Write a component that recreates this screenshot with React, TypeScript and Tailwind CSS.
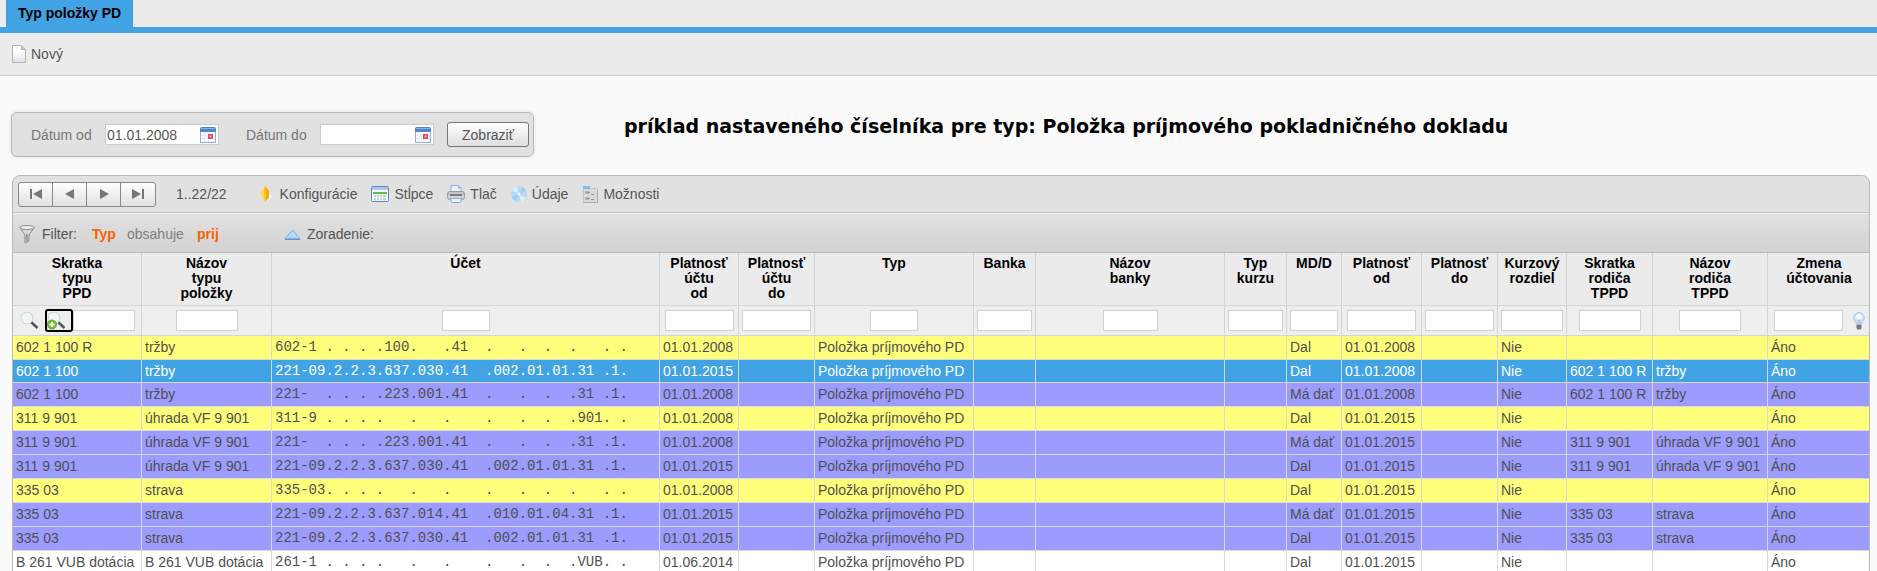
import type { ReactNode } from 'react'

type Column = { title: string; width: string; field: string }

const columns: Column[] = [
  { title: 'Skratka\ntypu\nPPD', width: 'w-[129px]', field: 'w-[62px]' },
  { title: 'Názov\ntypu\npoložky', width: 'w-[130px]', field: 'w-[62px]' },
  { title: 'Účet', width: 'w-[388px]', field: 'w-[48px]' },
  { title: 'Platnosť\núčtu\nod', width: 'w-[79px]', field: 'w-[69px]' },
  { title: 'Platnosť\núčtu\ndo', width: 'w-[76px]', field: 'w-[69px]' },
  { title: 'Typ', width: 'w-[159px]', field: 'w-[48px]' },
  { title: 'Banka', width: 'w-[62px]', field: 'w-[55px]' },
  { title: 'Názov\nbanky', width: 'w-[189px]', field: 'w-[55px]' },
  { title: 'Typ\nkurzu', width: 'w-[62px]', field: 'w-[55px]' },
  { title: 'MD/D', width: 'w-[55px]', field: 'w-[48px]' },
  { title: 'Platnosť\nod', width: 'w-[80px]', field: 'w-[69px]' },
  { title: 'Platnosť\ndo', width: 'w-[76px]', field: 'w-[69px]' },
  { title: 'Kurzový\nrozdiel', width: 'w-[69px]', field: 'w-[62px]' },
  { title: 'Skratka\nrodiča\nTPPD', width: 'w-[86px]', field: 'w-[62px]' },
  { title: 'Názov\nrodiča\nTPPD', width: 'w-[115px]', field: 'w-[62px]' },
  { title: 'Zmena\núčtovania', width: 'w-[102px]', field: 'w-[69px]' },
]

const rowStyles = {
  parent: 'h-6 bg-[#ffff7b] text-[#505050]',
  child: 'h-6 bg-[#9c9cff] text-[#505050]',
  selected: 'h-[23px] bg-[#42a3e4] text-white',
  plain: 'h-6 bg-white text-[#505050]',
}

type Row = {
  kind: keyof typeof rowStyles
  code: string
  name: string
  account: string
  accountFrom: string
  side: string
  from: string
  parentCode?: string
  parentName?: string
}

const rows: Row[] = [
  { kind: 'parent', code: '602 1 100 R', name: 'tržby', account: '602-1 . . . .100.   .41  .   .  .  .   . .', accountFrom: '01.01.2008', side: 'Dal', from: '01.01.2008' },
  { kind: 'selected', code: '602 1 100', name: 'tržby', account: '221-09.2.2.3.637.030.41  .002.01.01.31 .1.', accountFrom: '01.01.2015', side: 'Dal', from: '01.01.2008', parentCode: '602 1 100 R', parentName: 'tržby' },
  { kind: 'child', code: '602 1 100', name: 'tržby', account: '221-  . . . .223.001.41  .   .  .  .31 .1.', accountFrom: '01.01.2008', side: 'Má dať', from: '01.01.2008', parentCode: '602 1 100 R', parentName: 'tržby' },
  { kind: 'parent', code: '311 9 901', name: 'úhrada VF 9 901', account: '311-9 . . . .   .   .    .   .  .  .901. .', accountFrom: '01.01.2008', side: 'Dal', from: '01.01.2015' },
  { kind: 'child', code: '311 9 901', name: 'úhrada VF 9 901', account: '221-  . . . .223.001.41  .   .  .  .31 .1.', accountFrom: '01.01.2008', side: 'Má dať', from: '01.01.2015', parentCode: '311 9 901', parentName: 'úhrada VF 9 901' },
  { kind: 'child', code: '311 9 901', name: 'úhrada VF 9 901', account: '221-09.2.2.3.637.030.41  .002.01.01.31 .1.', accountFrom: '01.01.2015', side: 'Dal', from: '01.01.2015', parentCode: '311 9 901', parentName: 'úhrada VF 9 901' },
  { kind: 'parent', code: '335 03', name: 'strava', account: '335-03. . . .   .   .    .   .  .  .   . .', accountFrom: '01.01.2008', side: 'Dal', from: '01.01.2015' },
  { kind: 'child', code: '335 03', name: 'strava', account: '221-09.2.2.3.637.014.41  .010.01.04.31 .1.', accountFrom: '01.01.2015', side: 'Má dať', from: '01.01.2015', parentCode: '335 03', parentName: 'strava' },
  { kind: 'child', code: '335 03', name: 'strava', account: '221-09.2.2.3.637.030.41  .002.01.01.31 .1.', accountFrom: '01.01.2015', side: 'Dal', from: '01.01.2015', parentCode: '335 03', parentName: 'strava' },
  { kind: 'plain', code: 'B 261 VUB dotácia', name: 'B 261 VUB dotácia', account: '261-1 . . . .   .   .    .   .  .  .VUB. .', accountFrom: '01.06.2014', side: 'Dal', from: '01.01.2015' },
]

function PageIcon() {
  return (
    <svg width="14" height="18" viewBox="0 0 14 18">
      <defs>
        <linearGradient id="page" x1="0" y1="0" x2="0" y2="1">
          <stop offset="0.4" stopColor="#fff" />
          <stop offset="1" stopColor="#e0e0e0" />
        </linearGradient>
      </defs>
      <path d="M.5.5h9l4 4v13H.5z" fill="url(#page)" stroke="#b4b4b4" />
      <path d="M9.5.5v4h4z" fill="#ccc" stroke="#b4b4b4" />
    </svg>
  )
}

function CalendarIcon() {
  return (
    <svg width="16" height="16" viewBox="0 0 16 16">
      <rect x=".5" y="1.5" width="15" height="14" fill="#f6f9ff" stroke="#8fb0e0" />
      <path d="M0 2Q0 0 2 0h12q2 0 2 2v3H0z" fill="#4f86cb" />
      <path d="M1 1h14v1H1z" fill="#8db2e2" />
      <path d="M1 8.5h14M1 11.5h14M4.5 6v9M8.5 6v9" stroke="#e3eaf6" />
      <rect x="8" y="7" width="5" height="5" fill="#d9485f" />
      <rect x="9.5" y="8.5" width="2" height="2" fill="#f7b4bd" />
    </svg>
  )
}

function ConfigIcon() {
  return (
    <svg width="16" height="18" viewBox="0 0 16 18">
      <path d="M8 6l7 6-8 5z" fill="#eef2fa" stroke="#d0d6e2" strokeWidth=".6" />
      <path d="M6 1L1 7.5l5 9.500z" fill="#ffd84f" />
      <path d="M6 1l4 5v7l-4 3.500z" fill="#eeb000" />
      <path d="M5 2l2 3v10l-2-1z" fill="#fac71f" />
    </svg>
  )
}

function ColumnsIcon() {
  return (
    <svg width="18" height="16" viewBox="0 0 18 16">
      <rect x=".5" y=".5" width="17" height="15" rx="1" fill="#f3f7fb" stroke="#5b86b8" />
      <path d="M1 1h16v3H1z" fill="#a9c6ec" />
      <path d="M1 4h16v1H1z" fill="#fff" />
      <path d="M2 6h14v2H2z" fill="#5fbd3f" />
      <path d="M3 9h2v2H3zM6 9h2v2H6zM9 9h2v2H9zM12 9h3v2h-3zM3 12h2v2H3zM6 12h2v2H6zM9 12h2v2H9zM12 12h3v2h-3z" fill="#c3cedb" />
    </svg>
  )
}

function PrinterIcon() {
  return (
    <svg width="18" height="18" viewBox="0 0 18 18">
      <path d="M4 8V.5h7l3 3V8z" fill="#eaf4ff" stroke="#89aee0" />
      <path d="M11 .5v3h3z" fill="#7fa8e6" />
      <rect x=".5" y="6.5" width="17" height="8" rx="2.500" fill="#c6c6c6" stroke="#9a9a9a" />
      <path d="M3 9h12v2H3z" fill="#7a7a7a" />
      <path d="M1 11.5h16v1H1z" fill="#e4e4e4" />
      <path d="M3.5 13.5h11l-1 4h-9z" fill="#e8f3ff" stroke="#84abe2" />
    </svg>
  )
}

function DiscIcon() {
  return (
    <svg width="16" height="16" viewBox="0 0 16 16">
      <circle cx="8" cy="8" r="8" fill="#b5dbf8" />
      <path d="M8 8L1 4a8 8 0 0 1 5-4zM8 8l7 4a8 8 0 0 1-5 4z" fill="#deeffc" />
      <path d="M8 8l4-7a8 8 0 0 1 3 4zM8 8l-4 7a8 8 0 0 1-3-4z" fill="#9accf5" />
      <circle cx="8" cy="8" r="2" fill="#fff" stroke="#a5cdec" strokeWidth=".8" />
    </svg>
  )
}

function OptionsIcon() {
  return (
    <svg width="16" height="17" viewBox="0 0 16 17">
      <rect x="1.5" y="2.5" width="14" height="14" rx="1" fill="#d9d9d9" stroke="#c2c2c2" />
      <path d="M1 16.5h14.5V4" fill="none" stroke="#acacac" />
      <path d="M1 0h7v3H1z" fill="#7cc0ea" />
      <path d="M3 5h4v3H3zM3 11h4v3H3z" fill="#b5b5b5" />
      <path d="M5 6.5h3M9 8.500h3M5 12.5h3M9 13.5h3" stroke="#909090" />
    </svg>
  )
}

function FunnelIcon() {
  return (
    <svg width="16" height="19" viewBox="0 0 16 19">
      <path d="M.8 2.500L6 10v8l4-2v-6l5.200-7.500z" fill="#d9d9d9" stroke="#8b8b8b" />
      <path d="M8 9v7" stroke="#9d9d9d" strokeWidth="2" />
      <ellipse cx="8" cy="2.500" rx="7.300" ry="2" fill="#eee" stroke="#8b8b8b" />
    </svg>
  )
}

function SortIcon() {
  return (
    <svg width="17" height="11" viewBox="0 0 17 11">
      <path d="M1 9.5L8.5 1 16 9.5z" fill="#b5d7fa" stroke="#84b0e4" />
      <path d="M1 10.5h15" stroke="#6d90bd" />
    </svg>
  )
}

function SearchIcon({ plus = false }: { plus?: boolean }) {
  return (
    <svg width="19" height="19" viewBox="0 0 19 19">
      <path d="M11 11l6.500 6" stroke="#555" strokeWidth="2.500" />
      <circle cx="7" cy="7" r="5.800" fill="#f1f6f8" stroke="#d0d7da" strokeWidth="1.200" />
      {plus && (
        <>
          <circle cx="5" cy="13.500" r="4.500" fill="#6fc22e" stroke="#5fae2a" />
          <path d="M5 11v5M2.500 13.500h5" stroke="#fff" strokeWidth="1.800" />
        </>
      )}
    </svg>
  )
}

function BulbIcon() {
  return (
    <svg width="12" height="18" viewBox="0 0 12 18">
      <path d="M6 .6a5.300 5.300 0 0 0-5.300 5.300C.7 9 3.500 10 3.500 12.500h5C8.500 10 11.300 9 11.300 5.900A5.300 5.300 0 0 0 6 .6z" fill="#cfe5fc" stroke="#9dc6f3" />
      <ellipse cx="6" cy="4.500" rx="3" ry="2.500" fill="#fff" />
      <path d="M5 8v4.500M7 8v4.500" stroke="#a5aeb8" />
      <path d="M3.500 13h5v3l-1 1.500h-3l-1-1.500z" fill="#777" />
    </svg>
  )
}

function DateField({ id, label, value }: { id: string; label: string; value: string }) {
  return (
    <div className="flex items-center gap-3">
      <label htmlFor={id} className="w-[62px] text-[#777]">{label}</label>
      <div className="flex h-[21px] w-[114px] items-center border border-[#ccc] bg-white pr-0.5">
        <input id={id} defaultValue={value} className="min-w-0 flex-1 pl-px text-[#555] outline-none" />
        <button type="button" aria-label="Kalendár"><CalendarIcon /></button>
      </div>
    </div>
  )
}

function ToolButton({ icon, children }: { icon: ReactNode; children: ReactNode }) {
  return (
    <button className="flex items-center gap-[5px] whitespace-nowrap">
      {icon}
      {children}
    </button>
  )
}

const pager = [
  { label: 'Prvá', path: 'M1 1h2v10H1zM13 1v10L4 6z' },
  { label: 'Predchádzajúca', path: 'M11 1v10L2 6z' },
  { label: 'Nasledujúca', path: 'M3 1v10l9-5z' },
  { label: 'Posledná', path: 'M1 1v10l9-5zM11 1h2v10h-2z' },
]

export default function App() {
  return (
    <div className="h-screen overflow-hidden bg-[#fafafa] font-['Liberation_Sans',Arial,sans-serif] text-sm leading-4 text-[#555]">
      {/* Tabs */}
      <nav className="flex h-[33px] items-start border-b-[6px] border-[#42a3e4] bg-[#ececec] pl-1.5">
        <button className="h-[27px] bg-[#42a3e4] px-3 pb-0.5 font-bold text-black">Typ položky PD</button>
      </nav>
      <div className="flex h-[43px] items-center border-b border-[#d0d0d0] bg-[#ececec] pl-3">
        <button className="flex items-center gap-[5px]"><PageIcon />Nový</button>
      </div>

      {/* Date range */}
      <div className="flex items-center gap-[90px] px-[11px] pt-9">
        <form className="flex h-[45px] w-[523px] shrink-0 items-center rounded-md border border-[#b8b8b8] bg-[#e1e1e1] pl-[19px] shadow-[0_0_0_2px_#f1f1f1]">
          <DateField id="od" label="Dátum od" value="01.01.2008" />
          <div className="ml-[27px]"><DateField id="do" label="Dátum do" value="" /></div>
          <button type="button" className="ml-[13px] h-[25px] w-[82px] rounded-[3px] border border-[#777] bg-linear-to-b from-white to-[#dedede]">Zobraziť</button>
        </form>
        <h1 className="pb-[18px] font-['DejaVu_Sans',Verdana,sans-serif] text-[19px] leading-6 font-bold whitespace-nowrap text-black">
          príklad nastaveného číselníka pre typ: Položka príjmového pokladničného dokladu
        </h1>
      </div>

      <section className="mt-[18px] mr-[7px] ml-3 overflow-hidden rounded-t-lg border border-[#b8b8b8] bg-[#e1e1e1]">
        {/* Toolbar */}
        <div className="flex h-[37px] items-center border-b border-[#c4c4c4] pl-[5px]">
          <div className="flex h-[25px] divide-x divide-[#888] rounded-[3px] border border-[#888] bg-linear-to-b from-white to-[#e0e0e0]">
            {pager.map((p) => (
              <button key={p.label} aria-label={p.label} className="flex w-[34px] items-center justify-center">
                <svg width="14" height="12" viewBox="0 0 14 12"><path d={p.path} fill="#777" /></svg>
              </button>
            ))}
          </div>
          <span className="mr-8 ml-5">1..22/22</span>
          <div className="flex items-center gap-3.5">
            <ToolButton icon={<ConfigIcon />}>Konfigurácie</ToolButton>
            <ToolButton icon={<ColumnsIcon />}>Stĺpce</ToolButton>
            <ToolButton icon={<PrinterIcon />}>Tlač</ToolButton>
            <ToolButton icon={<DiscIcon />}>Údaje</ToolButton>
            <ToolButton icon={<OptionsIcon />}>Možnosti</ToolButton>
          </div>
        </div>

        {/* Active filter and sorting */}
        <div className="flex h-10 items-center border-t border-b border-t-[#f0f0f0] border-b-[#bbb] bg-linear-to-b from-[#e1e1e1] to-[#d2d2d2] pt-0.5 pl-1.5">
          <FunnelIcon />
          <span className="ml-[7px] w-[50px]">Filter:</span>
          <a href="#typ" className="w-[35px] font-bold text-[#f96400]">Typ</a>
          <span className="w-[70px] text-[#808080]">obsahuje</span>
          <a href="#prij" className="w-[87px] font-bold text-[#f96400]">prij</a>
          <button className="flex items-center gap-1.5"><SortIcon />Zoradenie:</button>
        </div>

        <table className="w-full table-fixed border-separate border-spacing-0">
          <thead className="bg-[#ebebeb] text-black">
            <tr className="h-[53px]">
              {columns.map((c, i) => (
                <th key={i} className={`${c.width} border-r border-b border-[#d5d5d5] px-0 pt-[3px] pb-0 align-top leading-[15px] font-bold whitespace-pre-line last:border-r-0`}>
                  {c.title}
                </th>
              ))}
            </tr>
            <tr className="h-[30px] bg-[#eee]">
              {columns.map((c, i) => (
                <td key={i} className="border-r border-b border-[#d5d5d5] p-0 last:border-r-0">
                  <div className="flex items-center justify-center">
                    {i === 0 && (
                      <>
                        <button aria-label="Hľadať" className="mr-1.5"><SearchIcon /></button>
                        <button aria-label="Pridať filter" className="flex h-[23px] w-7 items-center rounded-[3px] border-2 border-black"><SearchIcon plus /></button>
                      </>
                    )}
                    <input aria-label={c.title} className={`${c.field} h-[21px] border border-[#d0d0d0] bg-white`} />
                    {i === columns.length - 1 && <button aria-label="Tip" className="ml-2.5"><BulbIcon /></button>}
                  </div>
                </td>
              ))}
            </tr>
          </thead>
          <tbody>
            {rows.map((r, i) => {
              const cells = [r.code, r.name, r.account, r.accountFrom, '', 'Položka príjmového PD', '', '', '', r.side, r.from, '', 'Nie', r.parentCode, r.parentName, 'Áno']
              return (
                <tr key={i} className={rowStyles[r.kind]}>
                  {cells.map((cell, j) => (
                    <td
                      key={j}
                      className={`border-r border-b border-[#d9d9d9] px-[3px] pt-[3px] pb-0 align-top whitespace-pre last:border-r-0 ${j === 2 ? "font-['Liberation_Mono','Courier_New',monospace]" : ''}`}
                    >
                      {cell}
                    </td>
                  ))}
                </tr>
              )
            })}
          </tbody>
        </table>
      </section>
    </div>
  )
}
